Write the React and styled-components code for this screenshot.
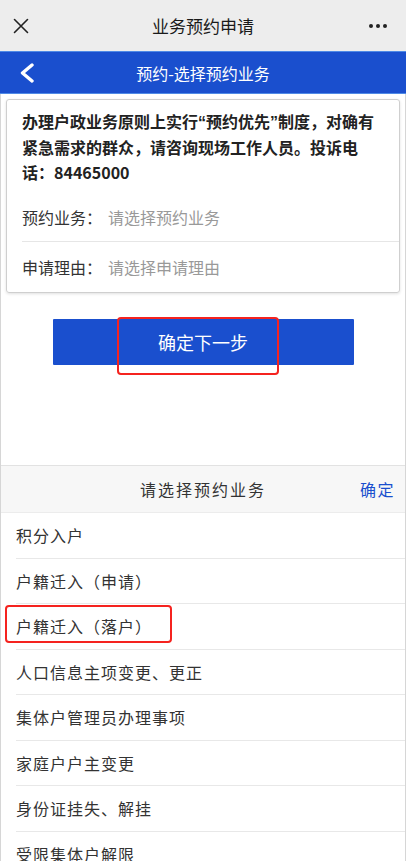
import React from 'react';
import styled, { createGlobalStyle } from 'styled-components';

const GlobalStyle = createGlobalStyle`
  html, body {
    margin: 0;
    padding: 0;
    background: #fff;
  }
  body {
    font-family: "Noto Sans CJK SC", "Noto Sans", sans-serif;
  }
  * {
    box-sizing: border-box;
  }
`;

const BLUE = '#1a4fce';

const Screen = styled.div`
  width: 406px;
  height: 861px;
  overflow: hidden;
  display: flex;
  flex-direction: column;
  background: #fff;
`;

const TopBar = styled.div`
  height: 51px;
  flex-shrink: 0;
  display: flex;
  align-items: center;
  justify-content: space-between;
  padding: 0 18px 0 13px;
  background: #ededed;
  position: relative;
`;

const TopTitle = styled.div`
  position: absolute;
  left: 0;
  right: 0;
  text-align: center;
  font-size: 17px;
  line-height: 24px;
  color: #1a1a1a;
  pointer-events: none;
`;

const NavBar = styled.div`
  height: 43px;
  flex-shrink: 0;
  display: flex;
  align-items: center;
  padding-left: 19px;
  background: ${BLUE};
  border-top: 1px solid #4f8ae6;
  border-bottom: 1px solid #4f8ae6;
  position: relative;
`;

const NavTitle = styled.div`
  position: absolute;
  left: 0;
  right: 0;
  text-align: center;
  font-size: 16px;
  line-height: 22px;
  color: #fff;
`;

const Body = styled.div`
  flex: 1;
  display: flex;
  flex-direction: column;
  border-left: 1px solid #d6d6d6;
  border-right: 1px solid #d6d6d6;
`;

const Card = styled.div`
  margin: 5px 5px 0 5px;
  padding: 9px 0 0 15px;
  border: 1px solid #cfcfcf;
  border-radius: 3px;
  box-shadow: 0 1px 3px rgba(0, 0, 0, 0.12);
  height: 194px;
`;

const Notice = styled.p`
  margin: 0 0 7px 0;
  padding-right: 12px;
  font-size: 16px;
  font-weight: 700;
  line-height: 25px;
  color: #222;
`;

const Quote = styled.span`
  font-family: "Liberation Sans", sans-serif;
`;

const FieldRow = styled.div`
  height: 50px;
  display: flex;
  align-items: center;
  font-size: 16px;
  line-height: 22px;
  border-bottom: ${(p) => (p.$divider ? '1px solid #e6e6e6' : 'none')};
`;

const FieldLabel = styled.span`
  color: #333;
  width: 86px;
`;

const FieldValue = styled.span`
  color: #999;
`;

const ButtonWrap = styled.div`
  position: relative;
  align-self: center;
  margin: 26px 0 100px;
`;

const PrimaryButton = styled.button`
  width: 301px;
  height: 46px;
  border: none;
  border-radius: 1px;
  background: ${BLUE};
  color: #fff;
  font-family: inherit;
  font-size: 18px;
  line-height: 24px;
  padding: 0;
`;

const Highlight = styled.div`
  position: absolute;
  border: 2px solid #f5231f;
  border-radius: 4px;
  pointer-events: none;
`;

const PickerHeader = styled.div`
  height: 48px;
  flex-shrink: 0;
  display: flex;
  align-items: center;
  justify-content: center;
  position: relative;
  background: #f7f7f7;
  border-top: 1px solid #e2e2e2;
  border-bottom: 1px solid #ececec;
  font-size: 16px;
  letter-spacing: 2px;
  color: #333;
`;

const PickerConfirm = styled.span`
  position: absolute;
  right: 10px;
  color: ${BLUE};
  letter-spacing: 1.5px;
`;

const List = styled.div`
  display: flex;
  flex-direction: column;
`;

const ListItem = styled.div`
  position: relative;
  height: 45.5px;
  flex-shrink: 0;
  margin-left: 15px;
  display: flex;
  align-items: center;
  border-bottom: 1px solid #e8e8e8;
  font-size: 16px;
  line-height: 22px;
  letter-spacing: 1px;
  color: #333;
`;

const items = [
  '积分入户',
  '户籍迁入（申请）',
  '户籍迁入（落户）',
  '人口信息主项变更、更正',
  '集体户管理员办理事项',
  '家庭户户主变更',
  '身份证挂失、解挂',
  '受限集体户解限',
];

const CloseIcon = () => (
  <svg width="16" height="16" viewBox="0 0 16 16">
    <path d="M1.5 1.5 L14.5 14.5 M14.5 1.5 L1.5 14.5" stroke="#222" strokeWidth="1.6" strokeLinecap="round" />
  </svg>
);

const MoreIcon = () => (
  <svg width="20" height="6" viewBox="0 0 20 6">
    <circle cx="3" cy="3" r="2" fill="#222" />
    <circle cx="10" cy="3" r="2" fill="#222" />
    <circle cx="17" cy="3" r="2" fill="#222" />
  </svg>
);

const BackIcon = () => (
  <svg width="16" height="20" viewBox="0 0 16 20">
    <path d="M13 2 L3.5 10 L13 18" stroke="#fff" strokeWidth="3.4" fill="none" strokeLinecap="round" strokeLinejoin="round" />
  </svg>
);

const App = () => (
  <>
    <GlobalStyle />
    <Screen>
      <TopBar>
        <CloseIcon />
        <TopTitle>业务预约申请</TopTitle>
        <MoreIcon />
      </TopBar>
      <NavBar>
        <BackIcon />
        <NavTitle>预约-选择预约业务</NavTitle>
      </NavBar>
      <Body>
        <Card>
          <Notice>
            办理户政业务原则上实行<Quote>“</Quote>预约优先<Quote>”</Quote>制度，对确有紧急需求的群众，请咨询现场工作人员。投诉电话：84465000
          </Notice>
          <FieldRow $divider>
            <FieldLabel>预约业务：</FieldLabel>
            <FieldValue>请选择预约业务</FieldValue>
          </FieldRow>
          <FieldRow>
            <FieldLabel>申请理由：</FieldLabel>
            <FieldValue>请选择申请理由</FieldValue>
          </FieldRow>
        </Card>
        <ButtonWrap>
          <PrimaryButton>确定下一步</PrimaryButton>
          <Highlight style={{ left: 64, top: -2, width: 162, height: 58 }} />
        </ButtonWrap>
        <PickerHeader>
          请选择预约业务
          <PickerConfirm>确定</PickerConfirm>
        </PickerHeader>
        <List>
          {items.map((label, i) => (
            <ListItem key={label}>
              {label}
              {i === 2 && <Highlight style={{ left: -11, top: 1, width: 167, height: 38 }} />}
            </ListItem>
          ))}
        </List>
      </Body>
    </Screen>
  </>
);

export default App;
